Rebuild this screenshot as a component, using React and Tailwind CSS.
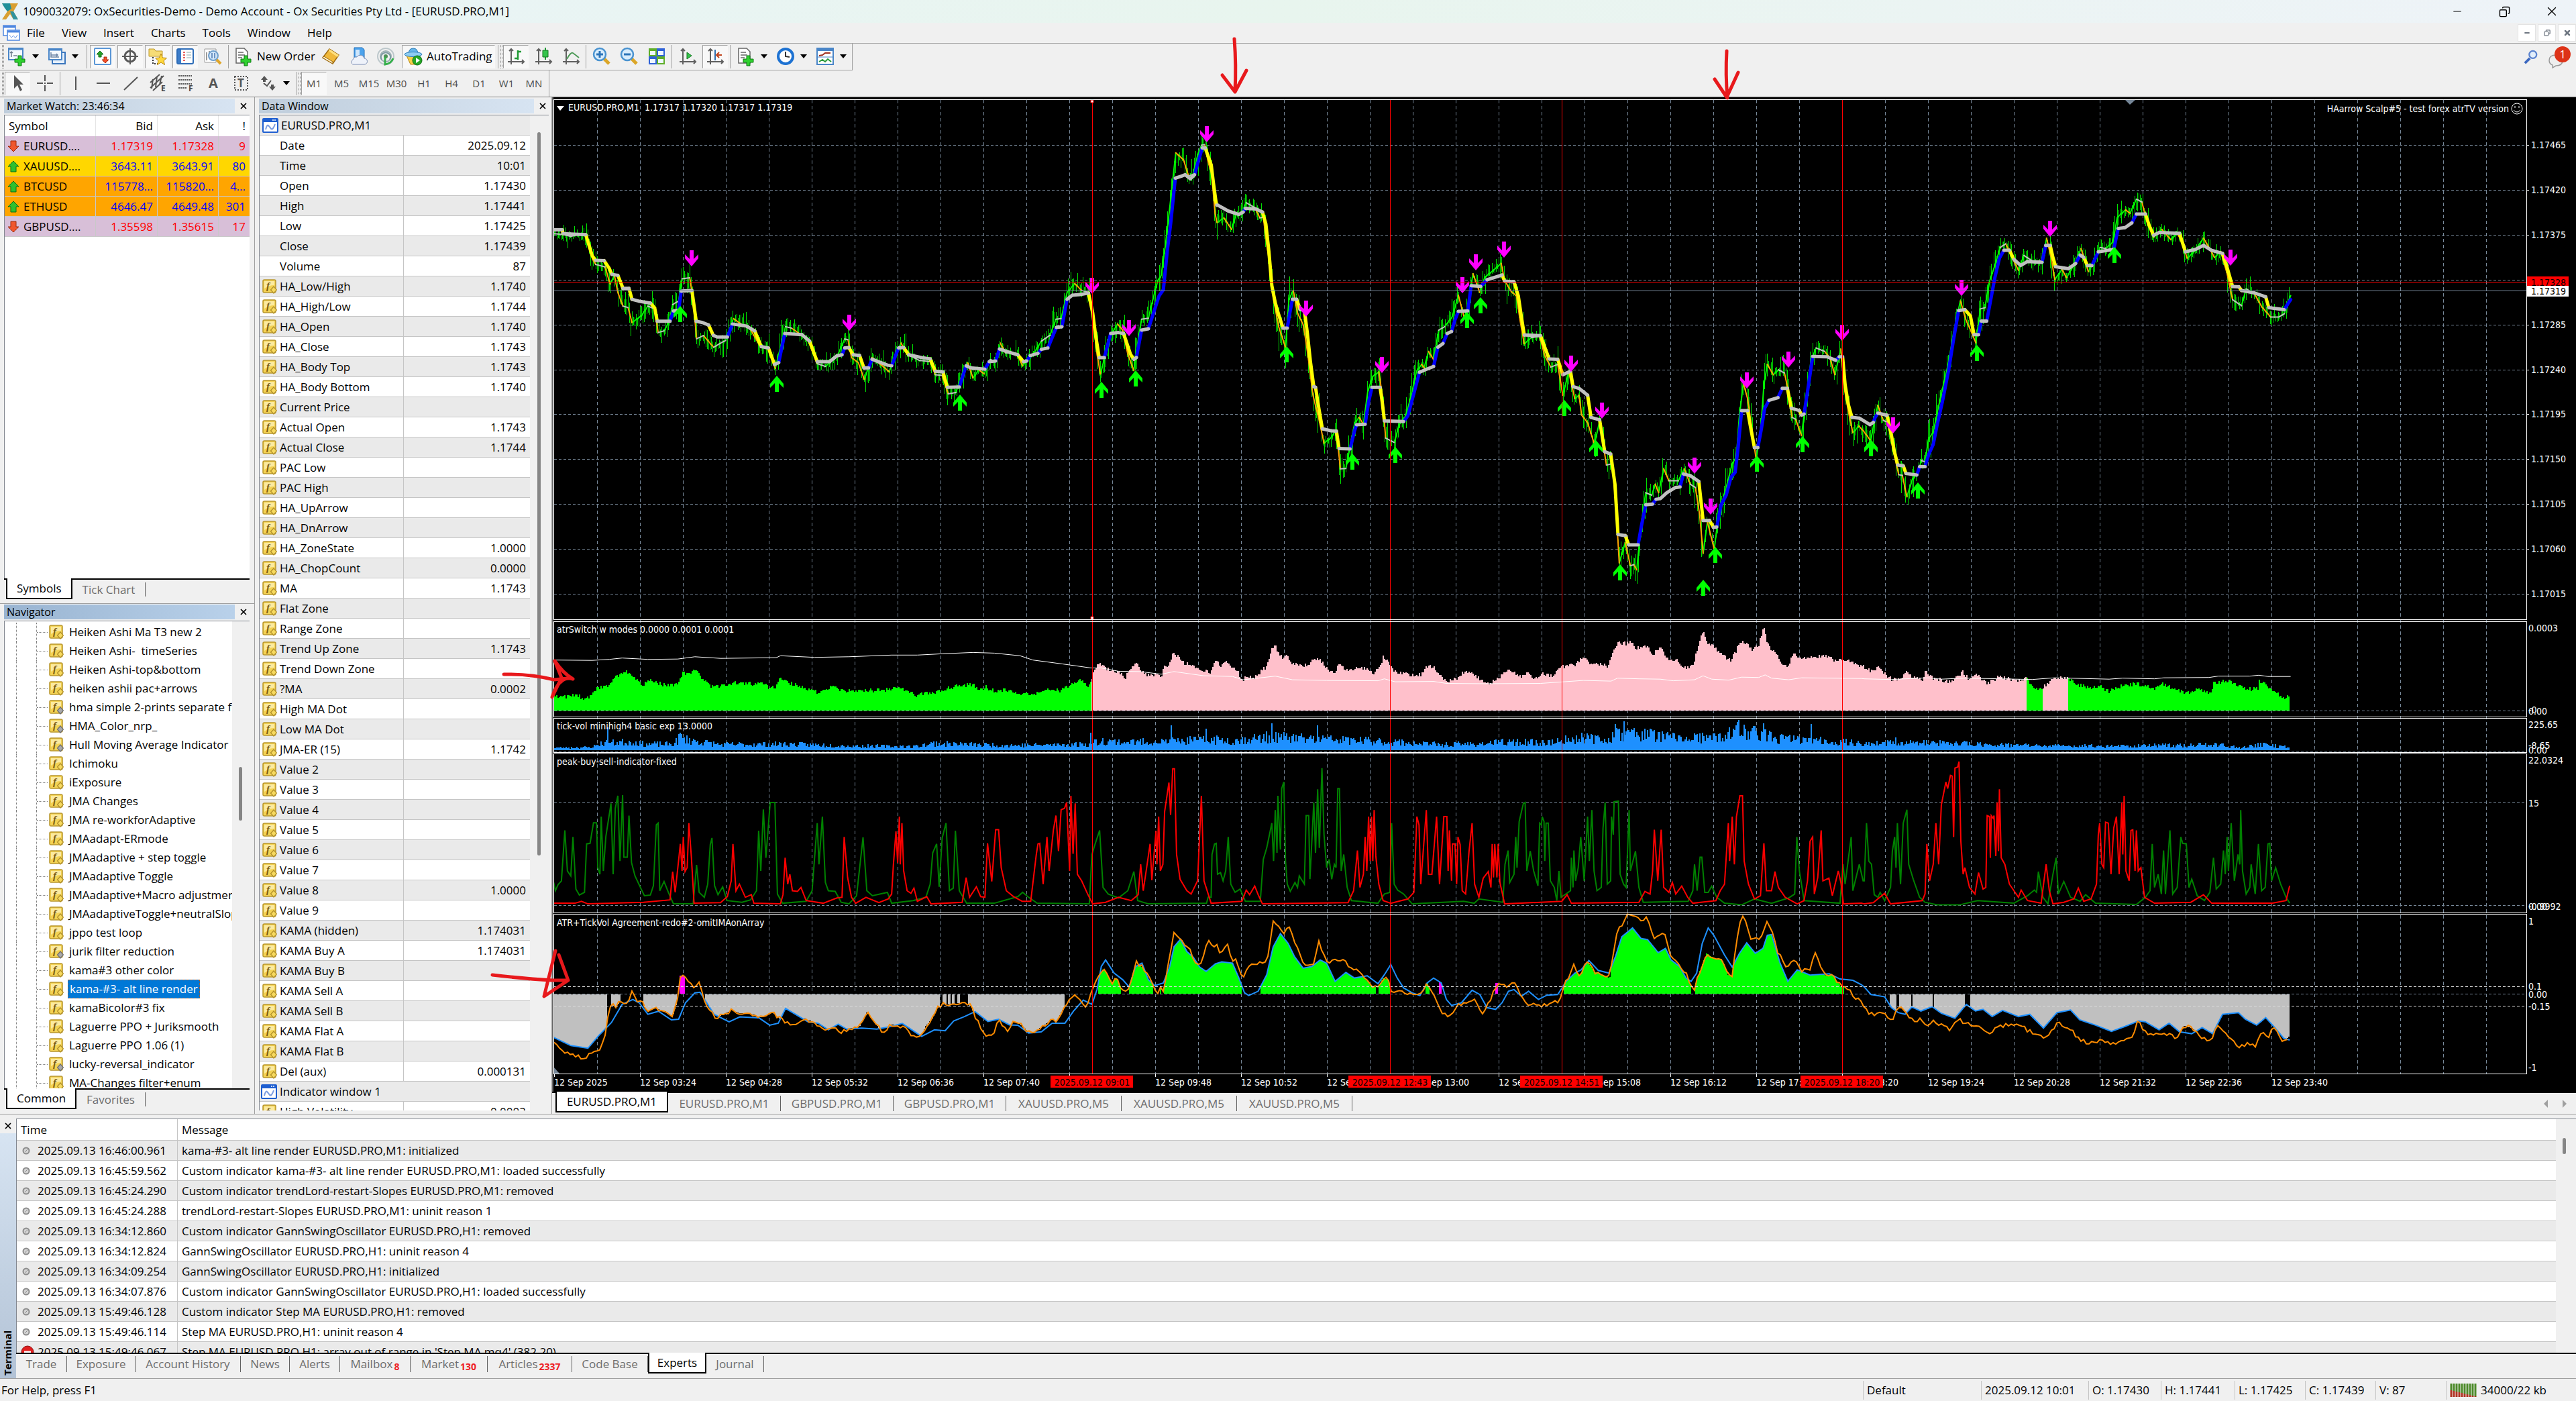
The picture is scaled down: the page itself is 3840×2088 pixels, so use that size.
import React from 'react';
import { Copy, Minus, X } from 'lucide-react';

/* ---------- static data ---------- */

const MENU = ['File', 'View', 'Insert', 'Charts', 'Tools', 'Window', 'Help'];
const TIMEFRAMES = ['M1', 'M5', 'M15', 'M30', 'H1', 'H4', 'D1', 'W1', 'MN'];

const QUOTES = [
  { symbol: 'EURUSD....', bid: '1.17319', ask: '1.17328', spread: '9', up: false, row: 'bg-[#d8bfd8] text-[#ff0000]' },
  { symbol: 'XAUUSD....', bid: '3643.11', ask: '3643.91', spread: '80', up: true, row: 'bg-[#ffd700] text-[#0000ff]' },
  { symbol: 'BTCUSD', bid: '115778...', ask: '115820...', spread: '4...', up: true, row: 'bg-[#ffa500] text-[#0000ff]' },
  { symbol: 'ETHUSD', bid: '4646.47', ask: '4649.48', spread: '301', up: true, row: 'bg-[#ffa500] text-[#0000ff]' },
  { symbol: 'GBPUSD....', bid: '1.35598', ask: '1.35615', spread: '17', up: false, row: 'bg-[#d8bfd8] text-[#ff0000]' },
];

// second field: true when the indicator has a grey (uncompiled) badge
const INDICATORS = [
  ['Heiken Ashi Ma T3 new 2'], ['Heiken Ashi-  timeSeries'], ['Heiken Ashi-top&bottom'], ['heiken ashii pac+arrows'],
  ['hma simple 2-prints separate full', true], ['HMA_Color_nrp_', true], ['Hull Moving Average Indicator', true], ['Ichimoku'],
  ['iExposure'], ['JMA Changes'], ['JMA re-workforAdaptive'], ['JMAadapt-ERmode'], ['JMAadaptive + step toggle'],
  ['JMAadaptive Toggle'], ['JMAadaptive+Macro adjustment'], ['JMAadaptiveToggle+neutralSlope'], ['jppo test loop'],
  ['jurik filter reduction', true], ['kama#3 other color'], ['kama-#3- alt line render'], ['kamaBicolor#3 fix'],
  ['Laguerre PPO + Juriksmooth'], ['Laguerre PPO 1.06 (1)'], ['lucky-reversal_indicator', true], ['MA-Changes filter+enum'],
];
const SELECTED = 'kama-#3- alt line render';

const BAR_VALUES = [
  ['Date', '2025.09.12'], ['Time', '10:01'], ['Open', '1.17430'], ['High', '1.17441'],
  ['Low', '1.17425'], ['Close', '1.17439'], ['Volume', '87'],
];
const BUFFERS = [
  ['HA_Low/High', '1.1740'], ['HA_High/Low', '1.1744'], ['HA_Open', '1.1740'], ['HA_Close', '1.1743'],
  ['HA_Body Top', '1.1743'], ['HA_Body Bottom', '1.1740'], ['Current Price', ''], ['Actual Open', '1.1743'],
  ['Actual Close', '1.1744'], ['PAC Low', ''], ['PAC High', ''], ['HA_UpArrow', ''], ['HA_DnArrow', ''],
  ['HA_ZoneState', '1.0000'], ['HA_ChopCount', '0.0000'], ['MA', '1.1743'], ['Flat Zone', ''], ['Range Zone', ''],
  ['Trend Up Zone', '1.1743'], ['Trend Down Zone', ''], ['?MA', '0.0002'], ['High MA Dot', ''], ['Low MA Dot', ''],
  ['JMA-ER (15)', '1.1742'], ['Value 2', ''], ['Value 3', ''], ['Value 4', ''], ['Value 5', ''], ['Value 6', ''],
  ['Value 7', ''], ['Value 8', '1.0000'], ['Value 9', ''], ['KAMA (hidden)', '1.174031'], ['KAMA Buy A', '1.174031'],
  ['KAMA Buy B', ''], ['KAMA Sell A', ''], ['KAMA Sell B', ''], ['KAMA Flat A', ''], ['KAMA Flat B', ''],
  ['Del (aux)', '0.000131'],
];

const LOG = [
  ['2025.09.13 16:46:00.961', 'kama-#3- alt line render EURUSD.PRO,M1: initialized'],
  ['2025.09.13 16:45:59.562', 'Custom indicator kama-#3- alt line render EURUSD.PRO,M1: loaded successfully'],
  ['2025.09.13 16:45:24.290', 'Custom indicator trendLord-restart-Slopes EURUSD.PRO,M1: removed'],
  ['2025.09.13 16:45:24.288', 'trendLord-restart-Slopes EURUSD.PRO,M1: uninit reason 1'],
  ['2025.09.13 16:34:12.860', 'Custom indicator GannSwingOscillator EURUSD.PRO,H1: removed'],
  ['2025.09.13 16:34:12.824', 'GannSwingOscillator EURUSD.PRO,H1: uninit reason 4'],
  ['2025.09.13 16:34:09.254', 'GannSwingOscillator EURUSD.PRO,H1: initialized'],
  ['2025.09.13 16:34:07.876', 'Custom indicator GannSwingOscillator EURUSD.PRO,H1: loaded successfully'],
  ['2025.09.13 15:49:46.128', 'Custom indicator Step MA EURUSD.PRO,H1: removed'],
  ['2025.09.13 15:49:46.114', 'Step MA EURUSD.PRO,H1: uninit reason 4'],
  ['2025.09.13 15:49:46.067', "Step MA EURUSD.PRO,H1: array out of range in 'Step MA.mq4' (382,20)", true],
];

const TERMINAL_TABS = [
  ['Trade', 'w-[76px]'], ['Exposure', 'w-[102px]'], ['Account History', 'w-[157px]'], ['News', 'w-[73px]'], ['Alerts', 'w-[75px]'],
  ['Mailbox', 'w-[105px]', '8'], ['Market', 'w-[115px]', '130'], ['Articles', 'w-[126px]', '2337'],
  ['Code Base', 'w-[113px]'], ['Experts', 'w-[87px]'], ['Journal', 'w-[86px]'],
];
const CHART_TABS = ['EURUSD.PRO,M1', 'EURUSD.PRO,M1', 'GBPUSD.PRO,M1', 'GBPUSD.PRO,M1', 'XAUUSD.PRO,M5', 'XAUUSD.PRO,M5', 'XAUUSD.PRO,M5'];

/* ---------- chart series ---------- */

// every series was sampled in three pieces, each with its own origin and scale
const PRICE = [[-4, -5, 1.568, 1.96], [976, -5, 1.568, 1.96], [1956, -145, 1.479, 1.668]];
const LOWER = [[-4, 765, 1.568, 2.036], [976, 765, 1.568, 2.036], [1956, 765, 1.479, 2.036]];

const pairs = (s) => s.trim().split(/\s+/).map((p) => p.split(',').map(Number));
const series = (frames, parts) => parts.flatMap((part, i) => {
  const [ox, oy, sx, sy] = frames[i];
  return pairs(part).map(([x, y]) => [ox + x / sx, oy + y / sy]);
}).sort((a, b) => a[0] - b[0]);

const slow = series(PRICE, [
  '10,397 30,397 32,408 85,411 100,473 108,486 128,487 140,510 146,527 160,530 168,555 172,568 186,568 193,600 208,605 236,611 246,625 252,664 282,664 290,634 302,632 308,576 333,574 343,664 358,668 372,675 383,705 392,710 416,710 428,672 460,678 480,692 495,738 512,742 526,790 536,785 550,700 590,703 608,722 626,782 655,782 672,765 684,762 690,742 700,741 710,762 725,764 735,800 746,800 754,775 790,792 800,794 816,742 828,741 840,762 870,770 890,774 902,810 920,812 930,857 958,856 974,794 985,800 1018,804 1028,782 1043,780 1052,745 1068,752 1095,762 1108,782 1116,780 1124,764 1142,758 1150,746 1165,742 1185,682 1198,680 1210,600 1222,588 1240,586 1260,582 1270,640 1276,700 1285,770 1297,770 1312,700 1330,697 1342,700 1350,730 1358,760 1366,775 1372,770 1384,690 1400,686 1412,640 1425,590 1435,572 1444,460 1452,380 1463,246 1478,240 1486,236 1498,248 1508,236 1516,200 1526,158 1533,158 1547,208 1552,260 1558,315 1560,325',
  '26,325 50,342 75,352 85,345 90,334 115,336 130,345 138,380 145,460 152,560 160,610 166,637 178,684 188,684 194,640 200,600 210,600 218,630 228,632 235,700 242,780 250,855 254,857 262,920 270,978 290,984 303,985 309,1036 335,1037 345,985 350,966 370,965 378,900 386,857 405,857 410,900 415,955 460,957 470,940 485,870 497,813 512,805 530,796 540,740 552,729 562,700 572,694 580,660 588,635 610,634 618,560 640,562 655,543 690,529 696,547 718,549 728,590 735,650 742,704 780,706 790,740 800,774 820,775 832,820 850,810 856,855 870,860 890,880 898,945 918,952 930,1045 944,1052 954,1140 961,1287 978,1290 986,1317 1008,1317 1016,1260 1026,1200 1042,1198 1050,1184 1060,1182 1075,1165 1095,1150 1106,1148 1114,1110 1130,1115 1150,1132 1156,1200 1160,1246 1175,1246 1184,1266 1192,1265 1202,1200 1214,1172 1225,1120 1235,1105 1242,1030 1250,925 1264,925 1272,980 1280,1033 1288,1033 1296,980 1304,918 1314,895 1335,887 1345,860 1357,860 1366,918 1385,925 1390,938 1396,935 1404,870 1416,767 1450,768 1470,778 1478,768 1486,768 1492,850 1500,910 1508,945 1525,947 1545,962 1550,966',
  '20,1050 24,1038 30,1027 50,1032 58,1070 66,1120 74,1156 86,1158 92,1177 116,1181 122,1160 134,1160 142,1130 152,1105 160,1060 172,1000 186,920 196,850 208,772 222,770 234,785 242,832 252,832 258,798 270,798 278,750 288,690 298,642 308,622 320,622 330,645 345,660 360,650 392,652 400,610 410,610 416,640 422,663 450,668 466,655 476,634 484,640 492,660 502,660 516,626 550,620 560,568 575,566 590,554 600,532 620,532 628,560 638,585 650,578 695,580 708,626 730,620 748,610 765,622 790,630 800,665 812,712 826,713 832,722 860,728 885,738 892,765 926,770 934,755 940,745',
]);

const fast = series(PRICE, [
  '10,408 30,410 50,416 70,410 88,415 100,480 108,498 130,505 142,555 152,530 160,580 172,620 184,624 193,668 215,648 230,620 246,628 254,697 268,692 280,665 288,615 302,605 310,540 328,537 336,600 344,715 360,706 384,740 400,728 412,720 430,656 448,672 470,688 492,736 512,745 528,802 540,740 552,680 566,684 590,705 606,724 626,788 645,796 672,768 690,716 698,718 706,770 722,785 736,834 754,770 778,794 794,812 808,765 822,728 836,760 864,778 890,782 902,820 918,822 932,876 950,872 970,800 978,786 990,830 1004,806 1016,818 1030,776 1044,782 1054,728 1066,756 1092,758 1106,794 1130,762 1150,722 1170,705 1184,658 1196,656 1210,580 1228,554 1244,574 1262,580 1270,650 1280,760 1288,818 1300,760 1312,705 1328,672 1340,690 1352,760 1366,808 1376,720 1384,658 1400,655 1410,604 1422,545 1430,530 1440,440 1452,310 1464,172 1482,192 1494,240 1504,235 1514,185 1524,150 1532,148 1540,200 1548,232 1556,350',
  '24,376 40,362 58,396 68,352 80,350 92,318 112,332 124,362 132,360 140,440 150,520 156,600 168,680 184,740 192,600 202,574 212,640 226,676 236,760 248,880 262,950 274,1020 290,1005 300,985 306,1020 312,1095 325,1094 336,1020 346,960 356,945 366,965 376,870 388,825 402,812 410,880 418,1005 438,1018 450,965 465,940 478,880 490,810 502,790 508,800 518,752 530,776 542,690 556,680 574,650 588,588 602,655 612,610 622,525 638,580 650,535 670,515 688,495 696,545 712,578 724,590 732,660 742,730 758,712 778,708 790,765 804,798 820,790 832,880 846,812 860,890 870,880 876,938 890,960 906,1024 918,956 934,1084 948,1080 956,1200 964,1370 978,1310 990,1378 998,1375 1005,1390 1015,1260 1026,1165 1040,1172 1048,1140 1056,1165 1068,1095 1080,1130 1102,1130 1116,1095 1130,1140 1142,1150 1152,1230 1160,1342 1170,1250 1186,1330 1196,1230 1214,1150 1228,1080 1238,1060 1244,950 1254,845 1264,890 1272,960 1284,1068 1296,960 1302,850 1310,790 1324,820 1336,806 1350,815 1358,860 1368,945 1376,950 1390,998 1400,900 1412,780 1424,742 1444,752 1456,770 1468,820 1482,745 1490,860 1500,930 1510,990 1524,970 1535,985',
  '14,1095 30,1008 42,1045 52,1050 64,1120 76,1180 84,1182 94,1235 106,1192 118,1175 126,1145 134,1148 142,1090 152,1075 162,1020 174,960 186,900 198,820 212,748 224,795 236,825 246,852 256,768 266,765 276,700 288,660 300,615 312,606 326,640 340,672 352,635 372,650 392,648 402,592 412,640 420,695 436,670 446,690 464,655 478,618 494,675 504,655 520,615 532,618 548,602 558,540 576,522 586,530 600,495 612,502 622,545 638,590 656,570 676,596 690,580 700,600 712,642 728,625 748,592 760,615 772,640 786,625 800,680 812,745 832,760 842,718 860,730 876,762 896,788 914,788 926,780 934,752 940,735',
]);

const sellMarks = series(PRICE, [
  '332,480 701,668 1269,560 1354,685 1536,118',
  '232,627 410,792 598,558 629,491 695,454 851,787 924,925 1140,1085 1178,1206 1263,836 1360,776 1485,698',
  '64,1057 214,715 410,568 807,640',
]);
const buyMarks = series(PRICE, [
  '305,643 531,846 960,901 1290,864 1371,832',
  '186,760 340,1075 440,1054 609,661 640,618 835,917 910,1035 966,1397 1161,1443 1189,1346 1286,1080 1393,1023 1553,1034',
  '15,1113 119,1219 249,877 551,634',
]);

const atr = series(LOWER, [
  '10,258 40,263 62,254 80,268 100,255 112,235 140,226 155,203 180,187 195,198 215,225 240,212 265,225 298,225 312,190 328,192 342,178 356,205 378,230 410,228 440,218 460,222 485,224 500,220 510,232 528,235 540,200 555,218 575,225 598,236 625,246 645,243 662,228 680,242 720,242 750,242 790,240 820,236 840,245 855,258 880,250 910,246 930,236 960,228 990,224 1005,238 1020,232 1040,242 1080,242 1100,252 1130,256 1150,245 1170,238 1195,244 1215,228 1240,210 1255,228 1264,228 1268,205 1270,192 1282,158 1295,165 1310,183 1330,185 1345,205 1358,180 1372,158 1385,185 1400,198 1420,192 1430,200 1438,170 1450,165 1458,122 1470,140 1485,158 1510,170 1530,182',
  '8,185 20,152 32,168 46,155 58,170 70,178 82,212 95,200 110,205 130,180 140,170 150,125 158,103 166,122 178,142 188,130 196,160 215,168 235,165 250,150 265,150 285,185 295,190 310,165 330,180 355,175 375,175 390,188 405,175 413,138 428,165 440,185 470,192 488,200 505,190 512,170 532,172 545,198 562,216 585,205 600,188 622,192 640,210 660,222 680,208 698,182 720,190 730,202 748,190 765,205 785,192 810,198 825,175 845,165 862,165 876,142 895,158 920,162 940,170 948,125 960,100 985,100 990,88 1000,115 1025,105 1045,132 1060,110 1078,145 1098,148 1115,175 1138,165 1146,120 1160,58 1170,98 1185,105 1200,128 1225,152 1238,120 1248,92 1262,98 1275,118 1290,105 1302,50 1312,105 1330,130 1345,160 1358,172 1370,132 1390,142 1420,145 1446,135 1465,150 1490,150 1520,160',
  '0,172 15,185 32,170 45,190 60,208 80,212 94,182 110,205 130,208 136,182 150,205 180,212 195,215 218,185 230,208 250,195 272,222 298,200 320,208 345,215 358,205 370,228 380,236 395,232 410,212 430,202 450,205 470,225 500,232 522,232 540,245 555,232 575,228 600,222 618,228 640,240 658,220 680,235 700,245 720,248 738,232 750,246 765,250 770,222 790,215 808,210 820,228 845,238 868,238 870,215 885,225 900,240 925,265 936,255 940,255',
]);
const atrSignal = series(LOWER, [
  '10,150 100,151 140,148 170,144 230,148 300,147 340,140 400,145 530,143 540,137 620,142 700,140 800,135 860,135 920,131 990,127 1040,129 1100,137 1130,150 1200,162 1266,174 1290,174 1330,184 1380,185 1430,193 1460,185 1530,198',
  '0,198 60,200 85,210 160,199 200,210 280,212 400,213 415,207 440,216 530,215 560,221 650,222 780,221 880,212 945,214 960,205 1010,207 1060,208 1090,213 1140,210 1160,198 1180,208 1220,211 1250,202 1290,203 1305,195 1320,205 1360,210 1390,204 1530,206',
  '0,207 60,209 140,204 170,208 220,205 300,207 370,209 420,204 540,208 570,205 640,207 660,204 760,203 780,199 850,199 870,196 890,200 940,200',
]);
const volume = series(LOWER, [
  '10,416 100,414 120,402 190,396 220,404 290,404 305,384 345,396 400,406 560,404 700,410 850,412 900,402 1000,406 1100,408 1200,406 1260,404 1290,394 1340,398 1450,396 1530,392',
  '0,388 60,394 150,382 300,390 440,398 550,406 620,404 700,398 800,400 880,382 930,394 950,374 1010,369 1100,386 1200,384 1245,359 1300,374 1330,386 1530,402',
  '0,404 70,400 200,402 400,410 600,410 780,406 830,416 870,406 940,414',
]);
const volumeSpikes = series(LOWER, ['137,354 305,370 1266,370 1453,348 1535,358', '152,342 258,348 955,345 976,336 1243,332 1302,342 1412,345', '70,384 137,392']);

const peakBuy = series(LOWER, [
  '10,825 14,850 20,832 28,820 36,667 42,790 50,805 55,687 62,845 70,863 82,855 87,708 95,706 103,644 110,644 113,780 118,800 121,625 126,790 132,685 144,585 149,800 154,600 160,562 165,760 171,560 174,748 182,748 186,622 192,765 200,805 212,838 222,865 236,863 243,835 250,650 254,645 258,850 268,822 278,855 290,890 336,890 344,772 350,855 362,870 370,830 376,710 380,690 386,835 394,862 405,838 415,880 450,885 470,878 484,850 489,668 494,790 500,603 506,750 516,582 527,582 533,860 545,888 600,882 614,850 626,645 630,770 638,625 645,825 652,850 668,852 682,885 700,890 718,865 733,688 742,850 755,865 790,855 800,888 850,880 880,870 890,830 896,735 905,708 911,838 918,690 927,645 935,850 944,842 949,668 958,850 975,888 1040,888 1095,868 1106,855 1118,868 1140,888 1262,890 1268,740 1276,706 1286,667 1294,840 1306,860 1330,872 1352,850 1366,792 1375,880 1400,890 1536,888',
  '3,870 10,870 12,740 18,708 22,706 25,800 32,795 38,820 44,790 50,687 56,830 66,855 78,845 90,882 125,882 132,755 140,720 152,645 156,760 160,605 164,735 166,562 172,725 175,540 180,520 184,760 188,830 195,852 206,825 212,840 216,805 228,830 232,622 238,622 241,815 250,582 254,735 259,542 263,720 269,478 274,680 280,780 286,755 292,815 298,770 302,780 306,540 310,540 314,790 320,740 328,840 338,880 400,888 415,860 428,855 432,645 438,830 446,848 460,860 480,890 600,882 625,888 636,875 692,885 697,770 704,728 708,825 718,800 722,687 725,780 730,640 740,585 744,582 748,790 756,730 764,790 774,835 778,645 782,650 784,625 788,640 790,760 793,645 798,645 803,820 812,840 818,880 823,790 828,870 850,850 852,750 856,840 858,728 862,820 868,780 874,687 882,820 890,625 894,760 900,605 905,790 912,850 922,840 926,660 931,582 936,830 944,820 946,625 950,680 952,580 962,578 966,800 974,830 980,840 987,605 990,790 1002,730 1010,840 1020,885 1125,882 1136,850 1140,770 1146,850 1153,748 1157,748 1164,855 1172,855 1180,836 1192,870 1210,888 1250,893 1280,875 1320,888 1360,872 1374,860 1379,687 1385,790 1396,880 1480,888 1487,770 1492,830 1506,687 1510,850 1525,770 1534,820',
  '0,820 5,645 10,760 16,770 22,862 30,870 35,855 45,880 58,840 62,730 67,687 70,780 73,645 80,830 86,645 94,604 98,770 108,815 122,870 134,885 160,893 210,893 250,880 330,888 360,865 375,848 380,855 384,792 394,870 405,890 416,800 423,750 428,860 440,822 455,870 476,882 488,862 510,888 600,892 620,870 630,850 635,708 640,840 648,800 655,860 660,728 664,860 674,667 680,860 690,840 698,687 702,706 710,708 716,840 722,815 734,865 750,880 762,855 770,750 776,845 786,830 792,728 796,800 800,687 803,790 809,645 816,820 824,740 828,770 830,605 834,790 842,860 850,840 853,770 862,860 869,708 876,850 884,840 890,708 894,706 898,820 907,780 918,830 930,870 938,888',
]);
const peakSell = series(LOWER, [
  '10,888 60,888 75,882 90,890 220,885 282,878 288,792 294,855 306,708 310,790 313,687 317,792 322,780 326,645 332,750 338,888 400,886 416,868 425,820 429,708 436,850 444,830 458,870 472,862 478,888 540,890 546,862 551,750 557,830 562,800 568,850 580,852 588,840 600,880 640,888 672,872 684,870 689,687 697,810 706,870 716,888 740,870 770,886 792,875 800,860 804,770 810,670 814,765 818,625 820,770 824,645 828,790 836,850 845,858 852,842 860,882 882,868 892,890 965,885 974,810 982,870 998,838 1008,868 1018,870 1024,706 1034,822 1043,665 1050,665 1056,780 1068,850 1085,868 1105,882 1125,882 1138,740 1142,708 1146,706 1154,830 1163,687 1168,790 1178,665 1184,622 1190,730 1196,604 1204,600 1209,582 1216,790 1219,562 1224,738 1229,585 1234,800 1244,820 1258,860 1270,890 1300,885 1330,870 1360,880 1376,862 1382,770 1388,850 1396,780 1404,708 1408,818 1418,668 1420,770 1424,625 1428,790 1434,770 1438,610 1448,522 1452,620 1457,480 1461,480 1466,740 1474,815 1490,850 1500,860 1515,820 1524,562 1530,820',
  '10,888 82,882 92,848 100,862 112,836 120,862 130,890 330,886 343,850 352,728 358,840 366,800 370,687 374,790 378,625 382,760 385,625 388,760 391,605 395,745 402,830 412,880 430,888 470,875 484,855 491,625 496,650 500,830 513,605 518,800 526,800 537,625 544,830 554,625 561,625 564,790 567,667 572,820 574,708 580,708 584,830 587,687 592,710 597,850 605,860 613,730 620,645 626,830 636,870 646,812 658,792 664,840 667,708 670,810 673,708 678,810 681,708 685,825 696,890 830,882 842,862 852,888 1010,885 1024,852 1036,860 1042,790 1046,665 1054,820 1062,665 1068,840 1080,855 1088,825 1096,860 1110,836 1124,870 1136,888 1190,880 1200,850 1210,830 1219,645 1222,760 1228,625 1233,770 1238,625 1246,562 1252,562 1256,760 1266,830 1280,875 1294,865 1302,706 1308,850 1320,850 1328,792 1336,840 1352,870 1380,890 1396,880 1404,820 1410,700 1416,687 1420,860 1428,810 1436,667 1440,820 1454,812 1462,865 1476,790 1482,825 1488,890 1530,888',
  '0,890 20,886 45,858 58,890 128,880 134,860 138,708 144,820 152,770 158,645 164,770 170,590 180,520 184,540 190,500 194,502 197,687 200,478 206,475 209,458 213,700 218,800 222,780 232,840 244,860 252,795 262,845 268,840 271,622 276,625 278,750 280,622 284,630 286,622 290,745 293,582 296,730 298,542 302,750 310,770 320,830 340,870 346,848 360,880 390,888 401,770 408,850 416,890 440,885 462,875 472,842 484,882 500,875 512,830 516,680 519,645 524,770 528,780 532,642 538,645 544,800 550,660 556,625 562,800 568,582 570,740 573,562 577,790 584,820 588,667 592,665 597,790 600,667 604,790 610,780 618,870 640,888 720,885 748,862 766,888 900,888 930,880 938,835',
]);

const tickVol = series(LOWER, [
  '10,1295 50,1320 90,1328 115,1290 145,1250 170,1195 195,1180 210,1190 230,1225 255,1216 285,1242 302,1240 318,1190 340,1160 352,1158 370,1195 385,1225 420,1248 445,1233 490,1236 515,1258 535,1252 552,1207 575,1225 605,1248 628,1252 652,1272 675,1255 695,1270 730,1267 765,1270 795,1263 825,1253 850,1275 870,1292 900,1272 925,1275 945,1245 970,1232 995,1217 1025,1247 1050,1240 1075,1257 1095,1258 1120,1282 1150,1278 1175,1252 1205,1252 1225,1215 1248,1182 1268,1195 1280,1150 1290,1080 1300,1060 1320,1100 1340,1120 1355,1142 1370,1080 1385,1070 1400,1120 1415,1138 1435,1130 1450,1080 1460,1020 1475,997 1490,1035 1505,1052 1520,1082 1535,1095',
  '8,1085 20,1072 35,1066 60,1070 75,1115 88,1160 98,1168 120,1155 140,1105 155,1020 172,980 190,1010 205,1050 225,1085 245,1080 265,1060 280,1070 300,1125 325,1098 345,1115 375,1108 400,1132 415,1105 430,1074 445,1115 460,1145 480,1160 498,1168 515,1130 530,1115 548,1130 560,1180 572,1198 595,1190 620,1152 638,1165 655,1205 675,1210 690,1190 705,1155 718,1150 735,1170 752,1155 775,1180 795,1167 820,1165 840,1125 860,1100 875,1090 893,1062 915,1092 940,1100 955,1050 970,990 995,963 1015,995 1030,998 1055,1038 1072,1025 1085,1060 1105,1080 1120,1115 1132,1125 1145,1100 1158,1010 1172,963 1185,985 1210,1045 1228,1082 1245,1040 1262,1008 1282,1040 1300,1025 1310,985 1320,983 1340,1070 1358,1125 1380,1090 1410,1106 1455,1102 1480,1118 1510,1122 1530,1135',
  '0,1142 15,1165 45,1172 60,1205 75,1220 90,1225 105,1203 125,1215 150,1202 170,1222 200,1237 225,1195 245,1215 262,1210 282,1232 305,1213 340,1232 365,1225 395,1267 425,1220 455,1212 475,1242 510,1258 545,1277 575,1262 605,1245 620,1248 650,1272 672,1252 695,1278 722,1284 745,1265 768,1284 790,1225 825,1220 840,1240 865,1258 885,1235 905,1265 925,1298 938,1303',
]);
const atrLine = series(LOWER, [
  '10,1312 35,1340 60,1352 80,1360 98,1342 120,1332 132,1275 140,1195 155,1202 165,1187 175,1198 185,1182 194,1148 202,1180 215,1185 228,1215 245,1207 262,1212 275,1218 288,1232 298,1190 306,1110 320,1110 335,1142 350,1132 362,1180 376,1215 390,1235 410,1225 425,1212 445,1222 470,1222 495,1235 520,1218 535,1235 550,1248 580,1258 590,1235 610,1245 628,1258 640,1270 655,1275 668,1260 680,1280 700,1268 725,1262 742,1218 760,1248 778,1280 800,1255 820,1262 835,1272 850,1292 866,1298 880,1260 895,1238 910,1200 925,1192 940,1196 968,1187 985,1200 1000,1245 1022,1295 1040,1280 1050,1242 1070,1278 1085,1245 1100,1255 1125,1285 1145,1268 1165,1250 1175,1240 1185,1250 1200,1210 1215,1182 1232,1168 1245,1195 1256,1212 1268,1145 1285,1110 1295,1085 1315,1128 1325,1115 1335,1140 1350,1155 1362,1110 1372,1065 1388,1085 1400,1110 1412,1140 1420,1165 1428,1140 1434,1155 1442,1110 1450,1040 1460,980 1475,1000 1492,1018 1505,1055 1520,1080 1530,1040',
  '2,1000 12,1018 22,1012 32,1045 48,1012 58,1065 70,1060 82,1118 100,1075 118,1070 135,1068 145,1040 155,940 170,960 180,975 190,950 205,1010 218,1045 230,1075 250,1070 262,1005 275,1050 288,1075 295,1055 320,1065 332,1078 350,1090 365,1110 382,1135 400,1145 412,1115 425,1120 432,1155 455,1150 470,1165 490,1168 508,1150 515,1125 522,1150 540,1190 552,1222 566,1235 580,1205 600,1190 625,1182 645,1222 660,1190 672,1150 682,1130 700,1140 718,1132 735,1165 750,1192 775,1200 800,1195 822,1185 838,1130 858,1078 872,1110 888,1060 905,1095 925,1105 942,1115 950,1040 962,955 974,955 978,923 1005,923 1010,935 1028,935 1045,992 1058,985 1070,985 1085,1055 1105,1075 1120,1100 1130,1130 1137,1162 1145,1120 1155,1085 1168,1040 1185,1055 1205,1060 1218,1105 1228,1110 1235,1040 1245,950 1254,923 1272,998 1285,992 1295,995 1308,938 1320,965 1335,1040 1355,1078 1378,1060 1390,1090 1408,1095 1420,1033 1430,1060 1445,1108 1462,1105 1482,1140 1498,1145 1510,1170 1530,1185',
  '0,1200 12,1222 45,1225 62,1245 74,1200 90,1215 112,1252 120,1235 140,1258 152,1242 172,1262 190,1272 208,1238 225,1255 255,1255 272,1285 295,1262 320,1255 350,1265 375,1285 398,1298 428,1250 450,1265 475,1300 495,1312 525,1302 550,1318 575,1298 592,1292 602,1245 628,1290 655,1280 672,1285 688,1302 706,1260 725,1268 745,1295 765,1308 780,1252 800,1290 830,1325 845,1310 862,1322 875,1280 890,1295 902,1265 925,1308 938,1290',
]);

const FIRST_BAR = 3;
const LAST_BAR = 2590;
const BAR = 2;

function valueAt(points, x) {
  let i = 1;
  while (i < points.length - 1 && points[i][0] < x) i += 1;
  const [x0, y0] = points[i - 1];
  const [x1, y1] = points[i];
  if (x1 === x0) return y1;
  const t = Math.min(1, Math.max(0, (x - x0) / (x1 - x0)));
  return y0 + (y1 - y0) * t;
}

// small seeded generator, so the bars are the same on every render
function noise(seed) {
  let s = seed;
  return () => {
    s = (s * 1664525 + 1013904223) % 4294967296;
    return s / 4294967296;
  };
}

const bars = [];
for (let x = FIRST_BAR; x <= LAST_BAR; x += BAR) bars.push(x);

const toPath = (points) => points.map(([x, y], i) => `${i ? 'L' : 'M'}${x.toFixed(1)} ${y.toFixed(1)}`).join('');

function wicks() {
  const rnd = noise(11);
  return bars.map((x) => {
    const y = valueAt(fast, x);
    const slope = Math.abs(valueAt(fast, x + 6) - valueAt(fast, x - 6));
    const reach = 9 + Math.min(20, slope * 0.4);
    const up = 1 + rnd() * reach + (rnd() > 0.9 ? 10 : 0);
    const down = 1 + rnd() * reach + (rnd() > 0.9 ? 10 : 0);
    return `M${x} ${(y - up).toFixed(1)}V${(y + down).toFixed(1)}`;
  }).join('');
}

// splits a line into rising, falling and flat runs
function runs(points, limit) {
  const out = { up: '', down: '', flat: '' };
  for (let i = 1; i < points.length; i += 1) {
    const [x0, y0] = points[i - 1];
    const [x1, y1] = points[i];
    const slope = (y1 - y0) / Math.max(1, x1 - x0);
    let key = 'flat';
    if (slope > limit) key = 'down';
    if (slope < -limit) key = 'up';
    out[key] += `M${x0.toFixed(1)} ${y0.toFixed(1)}L${x1.toFixed(1)} ${y1.toFixed(1)}`;
  }
  return out;
}

const ATR_BASE = 914;
const isCalm = (x) => x < 805 || (x > 2198 && x < 2223) || x > 2260;

function atrBars(calm) {
  const rnd = noise(5);
  return bars.map((x) => {
    const jitter = rnd() * 6 - 3;
    if (isCalm(x) !== calm) return '';
    return `M${x} ${ATR_BASE}V${(valueAt(atr, x) + jitter).toFixed(0)}`;
  }).join('');
}

const VOL_BASE = 973;

function volumeBars() {
  const rnd = noise(23);
  return bars.map((x) => {
    const h = (VOL_BASE - valueAt(volume, x)) * (0.5 + rnd() * 0.9);
    return `M${x} ${VOL_BASE}V${(VOL_BASE - h).toFixed(0)}`;
  }).join('');
}

const ZERO = 1336;
const BUY_LEVEL = 1326;
const SELL_LEVEL = 1351;
const SELL_GAPS = [[82, 89], [102, 137], [578, 583], [587, 591], [594, 597], [599, 605], [608, 621], [764, 1995], [2004, 2008], [2025, 2028], [2057, 2060], [2106, 2114]];
const inGap = (x) => SELL_GAPS.some(([from, to]) => x > from && x < to);

// the histogram is drawn only where both lines are on the same side
function agreement(side) {
  return bars.map((x) => {
    const a = valueAt(tickVol, x);
    const b = valueAt(atrLine, x);
    if (side === 'buy' && a < BUY_LEVEL && b < BUY_LEVEL) return `M${x} ${ZERO}V${Math.max(a, b).toFixed(0)}`;
    if (side === 'sell' && a > SELL_LEVEL - 5 && b > SELL_LEVEL - 5 && !inGap(x)) return `M${x} ${ZERO + 1}V${Math.min(a, b).toFixed(0)}`;
    return '';
  }).join('');
}

function jagged(points) {
  const rnd = noise(77);
  const out = [];
  for (let x = FIRST_BAR; x <= LAST_BAR; x += 4) out.push([x, valueAt(points, x) + rnd() * 6 - 3]);
  return out;
}

/* ---------- chart ---------- */

const PRICE_LEVELS = ['1.17465', '1.17420', '1.17375', '', '1.17285', '1.17240', '1.17195', '1.17150', '1.17105', '1.17060', '1.17015'];
const TIMES = [
  '12 Sep 2025', '12 Sep 03:24', '12 Sep 04:28', '12 Sep 05:32', '12 Sep 06:36', '12 Sep 07:40', '', '12 Sep 09:48',
  '12 Sep 10:52', '12 Sep 11:56', '12 Sep 13:00', '12 Sep 14:04', '12 Sep 15:08', '12 Sep 16:12', '12 Sep 17:16', '12 Sep 18:20',
  '12 Sep 19:24', '12 Sep 20:28', '12 Sep 21:32', '12 Sep 22:36', '12 Sep 23:40',
];
const MARKERS = [[805, '2025.09.12 09:01'], [1249, '2025.09.12 12:43'], [1505, '2025.09.12 14:51'], [1923, '2025.09.12 18:20']];
const RIGHT = 2943;
// top and bottom of every chart window
const WINDOWS = [[3, 778], [781, 923], [925, 976], [978, 1215], [1217, 1455]];

function ScaleText({ y, x = 2950, children }) {
  return <text x={x} y={y + 5} fill="#fff">{children}</text>;
}

function TradeMark({ x, y, down }) {
  return (
    <path
      d="M0-12L10 0V6L3-1V12H-3V-1L-10 6V0Z"
      fill={down ? '#ff00ff' : '#00ff00'}
      transform={`translate(${x.toFixed(0)} ${y.toFixed(0)})${down ? ' rotate(180)' : ''}`}
    />
  );
}

function PriceChart() {
  const slowRuns = runs(slow, 1);
  const fastRuns = runs(fast, 0.7);
  const columns = Array.from({ length: 45 }, (_, i) => 67 + i * 64);
  return (
    <svg className="block min-h-0 w-full flex-1 bg-black font-['DejaVu_Sans_Condensed','Noto_Sans',sans-serif] text-[14px]" role="img" aria-label="EURUSD.PRO,M1 chart">
      <g stroke="#778899" shapeRendering="crispEdges" fill="none">
        {columns.map((x) => <path key={x} d={`M${x}.5 4V1455`} strokeDasharray="5 4" />)}
        {PRICE_LEVELS.map((_, i) => <path key={i} d={`M3 ${Math.round(71 + i * 66.9)}.5H${RIGHT}`} strokeDasharray="4 3" />)}
        <path d={`M3 914.5H${RIGHT}M3 974.5H${RIGHT}M3 1051.5H${RIGHT}M3 1204.5H${RIGHT}M3 1336.5H${RIGHT}`} strokeDasharray="4 3" />
      </g>

      {/* price window */}
      <path d={wicks()} stroke="#00e000" shapeRendering="crispEdges" />
      <g fill="none" strokeWidth="2" strokeLinecap="round">
        <path d={fastRuns.up} stroke="#00ff00" />
        <path d={fastRuns.down} stroke="#ffa500" />
        <path d={fastRuns.flat} stroke="#c0c0c0" />
      </g>
      <g fill="none" strokeWidth="5" strokeLinecap="round">
        <path d={slowRuns.up} stroke="#0000ff" />
        <path d={slowRuns.down} stroke="#ffff00" />
        <path d={slowRuns.flat} stroke="#c0c0c0" />
      </g>
      {sellMarks.map(([x, y]) => <TradeMark key={x} x={x} y={y} down />)}
      {buyMarks.map(([x, y]) => <TradeMark key={x} x={x} y={y} />)}

      {/* volatility window */}
      <path d={atrBars(true)} stroke="#00ff00" strokeWidth="2" shapeRendering="crispEdges" />
      <path d={atrBars(false)} stroke="#ffc0cb" strokeWidth="2" shapeRendering="crispEdges" />
      <path d={toPath(atrSignal)} stroke="#fff" fill="none" strokeWidth="1" />

      {/* tick volume window */}
      <path d={volumeBars()} stroke="#1e90ff" strokeWidth="2" shapeRendering="crispEdges" />
      <path d={volumeSpikes.map(([x, y]) => `M${x.toFixed(0)} ${VOL_BASE}V${y.toFixed(0)}`).join('')} stroke="#1e90ff" strokeWidth="2" shapeRendering="crispEdges" />

      {/* peak window */}
      <path d={toPath(peakBuy)} stroke="#008000" fill="none" strokeWidth="2" />
      <path d={toPath(peakSell)} stroke="#ff0000" fill="none" strokeWidth="2" />

      {/* agreement window */}
      <path d={agreement('sell')} stroke="#c0c0c0" strokeWidth="2" shapeRendering="crispEdges" />
      <path d={agreement('buy')} stroke="#00ff00" strokeWidth="2" shapeRendering="crispEdges" />
      <path d={`M190 1309H198V${ZERO}H190ZM1322 1319H1326V${ZERO}H1322ZM1406 1320H1410V${ZERO}H1406Z`} fill="#ff00ff" />
      <path d={toPath(tickVol)} stroke="#1e90ff" fill="none" strokeWidth="2" />
      <path d={toPath(jagged(atrLine))} stroke="#ff8c00" fill="none" strokeWidth="2" />
      <path d={`M3 1325.5H${RIGHT}M3 1354.5H${RIGHT}`} stroke="#dcdcdc" strokeDasharray="4 3" shapeRendering="crispEdges" />

      {/* price lines and vertical markers */}
      <path d={`M3 275.5H${RIGHT}`} stroke="#ff0000" shapeRendering="crispEdges" />
      <path d={`M3 288.5H${RIGHT}`} stroke="#778899" shapeRendering="crispEdges" />
      {MARKERS.map(([x]) => <path key={x} d={`M${x}.5 4V1455`} stroke="#ff0000" shapeRendering="crispEdges" />)}
      <path d="M803 4h4v4h-4zM803 774h4v4h-4z" fill="#fff" stroke="#ff0000" />

      {/* frames */}
      <g stroke="#fff" fill="none" shapeRendering="crispEdges">
        {WINDOWS.map(([top, bottom]) => <path key={top} d={`M2.5 ${top}.5H${RIGHT}.5V${bottom}.5H2.5Z`} />)}
        {PRICE_LEVELS.map((_, i) => <path key={i} d={`M${RIGHT} ${Math.round(71 + i * 66.9)}.5h4`} />)}
        {TIMES.map((_, i) => <path key={i} d={`M${3 + i * 128}.5 1455v5`} />)}
      </g>
      <path d="M2 0H0V1482H2Z" fill="#696969" />
      <path d="M3 1446L11 1455H3Z" fill="#778899" />
      <path d="M2345 4H2360L2352 11Z" fill="#778899" />
      <path d="M7 13H18L12 20Z" fill="#fff" />

      <g fill="#fff">
        <text x="24" y="20" xmlSpace="preserve">EURUSD.PRO,M1  1.17317 1.17320 1.17317 1.17319</text>
        <text x="2917" y="22" textAnchor="end">HAarrow Scalp#5 - test forex atrTV version</text>
        <text x="7" y="798">atrSwitch w modes 0.0000 0.0001 0.0001</text>
        <text x="7" y="942">tick-vol minihigh4 basic exp 13.0000</text>
        <text x="7" y="995">peak-buy-sell-indicator-fixed</text>
        <text x="7" y="1235">ATR+TickVol Agreement-redo#2-omitIMAonArray</text>
      </g>
      <g fill="none" stroke="#fff">
        <circle cx="2929" cy="17" r="8" />
        <path d="M2924 19q5 6 10 0M2926 13v3M2932 13v3" />
      </g>

      {PRICE_LEVELS.map((label, i) => (label ? <ScaleText key={label} y={71 + i * 66.9}>{label}</ScaleText> : null))}
      <rect x={RIGHT + 1} y="267" width="62" height="17" fill="#ff0000" />
      <ScaleText y={276}><tspan fill="#000">1.17328</tspan></ScaleText>
      <rect x={RIGHT + 1} y="281" width="62" height="16" fill="#fff" />
      <ScaleText y={289}><tspan fill="#000">1.17319</tspan></ScaleText>
      <ScaleText x={2946} y={791}>0.0003</ScaleText>
      <ScaleText x={2946} y={915}>0.00</ScaleText>
      <ScaleText x={2946} y={913}>-0</ScaleText>
      <ScaleText x={2946} y={935}>225.65</ScaleText>
      <ScaleText x={2946} y={966}>-8.65</ScaleText>
      <ScaleText x={2946} y={973}>0.00</ScaleText>
      <ScaleText x={2946} y={988}>22.0324</ScaleText>
      <ScaleText x={2946} y={1052}>15</ScaleText>
      <ScaleText x={2946} y={1206}>0.00</ScaleText>
      <ScaleText x={2946} y={1206}>-0.9992</ScaleText>
      <ScaleText x={2946} y={1228}>1</ScaleText>
      <ScaleText x={2946} y={1325}>0.1</ScaleText>
      <ScaleText x={2946} y={1337}>0.00</ScaleText>
      <ScaleText x={2946} y={1355}>-0.15</ScaleText>
      <ScaleText x={2946} y={1446}>-1</ScaleText>

      {TIMES.map((t, i) => (t ? <text key={t} x={3 + i * 128} y="1473" fill="#fff">{t}</text> : null))}
      {MARKERS.map(([x, label]) => (
        <g key={label}>
          <rect x={x - 62} y="1458" width="123" height="18" fill="#ff0000" />
          <text x={x} y="1473" textAnchor="middle" fill="#000">{label}</text>
        </g>
      ))}
    </svg>
  );
}

/* ---------- icons ---------- */

function Svg({ children, label }) {
  return <svg viewBox="0 0 28 28" className="size-7 shrink-0 overflow-visible" aria-label={label} aria-hidden={label ? undefined : true}>{children}</svg>;
}

function FunctionIcon({ grey }) {
  return (
    <svg viewBox="0 0 22 22" className="size-[22px] shrink-0" aria-hidden="true">
      <rect x="1" y="1" width="19" height="19" rx="2" fill="#f3d254" stroke="#b8962e" strokeWidth="1.5" />
      <path d="M3 3h15v6q-8 0-15 5z" fill="#fbeaa0" />
      <text x="6" y="15" fontSize="15" fontStyle="italic" fontWeight="bold" fontFamily="Liberation Serif, serif" fill="#7a5c12">f</text>
      <path d="M17 11l4.500 5-4.500 5-4.500-5z" fill={grey ? '#a9a9a9' : '#f6d95f'} stroke={grey ? '#6f6f6f' : '#b08f2a'} strokeWidth="1.200" />
    </svg>
  );
}

function WindowIcon() {
  return (
    <svg viewBox="0 0 24 22" className="h-[22px] w-6 shrink-0" aria-hidden="true">
      <rect x="1" y="1" width="22" height="20" rx="1" fill="#fff" stroke="#1f5fd0" strokeWidth="2" />
      <path d="M1 1h22v5H1z" fill="#1f5fd0" />
      <path d="M15 3h2M18 3h2" stroke="#fff" strokeWidth="1.500" />
      <path d="M5 17q2-8 4-6t4 5q3 2 6-7" fill="none" stroke="#7b9ce0" strokeWidth="2" />
    </svg>
  );
}

function PlusBadge() {
  return <path d="M15 13h5v5h5v5h-5v5h-5v-5h-5v-5h5z" fill="#2fd02f" stroke="#0c7a12" />;
}

function NewChartIcon() {
  return (
    <Svg>
      <rect x="1" y="2" width="21" height="17" fill="#f4f9ff" stroke="#4a86c8" strokeWidth="2" />
      <path d="M1 3h21" stroke="#4a86c8" strokeWidth="3" />
      <path d="M5 7v8M3 9l2-2 2 2M8 13h6" fill="none" stroke="#6f7f90" strokeWidth="1.500" />
      <PlusBadge />
    </Svg>
  );
}

function ProfilesIcon() {
  return (
    <Svg>
      <rect x="7" y="8" width="19" height="17" fill="#e6f0fb" stroke="#3a76bd" strokeWidth="2" />
      <rect x="2" y="3" width="19" height="16" fill="#f4f9ff" stroke="#4a86c8" strokeWidth="2" />
      <path d="M2 4h19" stroke="#4a86c8" strokeWidth="3" />
      <path d="M5 8v7h12M5 12h10M13 10l2 2-2 2" fill="none" stroke="#6f86a5" strokeWidth="1.500" />
    </Svg>
  );
}

function MarketWatchIcon() {
  return (
    <Svg>
      <rect x="2" y="2" width="24" height="24" rx="1" fill="#fff" stroke="#5b97d6" strokeWidth="2" />
      <path d="M10 6l5 5h-3v4H8v-4H5z" fill="#27a327" stroke="#0e6b12" />
      <path d="M18 24l5-5h-3v-4h-4v4h-3z" fill="#f2512a" stroke="#b02a0a" />
    </Svg>
  );
}

function CrosshairIcon() {
  return (
    <Svg>
      <circle cx="14" cy="14" r="8" fill="none" stroke="#5a5a5a" strokeWidth="3" />
      <path d="M14 2v24M2 14h24" stroke="#5a5a5a" strokeWidth="2" />
    </Svg>
  );
}

function NavigatorIcon() {
  return (
    <Svg>
      <path d="M1 14V3h8l2 3h10v8z" fill="#f6dc77" stroke="#bf9a2c" />
      <path d="M7 15v10h8" fill="none" stroke="#333" strokeWidth="2" strokeDasharray="2 2" />
      <path d="M19 10l2.500 6 6 .5-4.500 4 1.500 6-5.500-3.500-5.500 3.500 1.500-6-4.500-4 6-.5z" fill="#ffd83b" stroke="#b98713" />
    </Svg>
  );
}

function DataWindowIcon() {
  return (
    <Svg>
      <rect x="2" y="3" width="24" height="22" rx="2" fill="#fff" stroke="#2e6db8" strokeWidth="2" />
      <path d="M3 4h5v20H3z" fill="#3b7cc9" />
      <path d="M11 8h3M11 12h3M11 16h3M11 20h3" stroke="#d33" strokeWidth="1.500" />
      <path d="M16 8h7M16 12h7M16 16h7" stroke="#8aa" />
    </Svg>
  );
}

function TesterIcon() {
  return (
    <Svg>
      <path d="M2 3h17v20H2z" fill="#fff" stroke="#9a9a9a" />
      <path d="M5 8v12M9 6v10" stroke="#999" strokeWidth="2" />
      <circle cx="15" cy="13" r="7" fill="#cfe6fb" fillOpacity="0.9" stroke="#6f9fcc" strokeWidth="2" />
      <path d="M13 9v8M17 9v8" stroke="#4b78b3" strokeWidth="1.500" />
      <path d="M20 19l6 6" stroke="#e0a62a" strokeWidth="4" />
    </Svg>
  );
}

function DocumentPlus() {
  return (
    <Svg>
      <path d="M3 2h12l5 5v17H3z" fill="#fff" stroke="#666" strokeWidth="1.500" />
      <path d="M6 8h8M6 12h10M6 16h6" stroke="#666" strokeWidth="1.500" />
      <PlusBadge />
    </Svg>
  );
}

function BookIcon() {
  return (
    <Svg>
      <path d="M2 16L12 3l14 9-9 13z" fill="#f0b83a" stroke="#9d6a10" strokeWidth="1.500" />
      <path d="M2 16l15 9v-3L4 14z" fill="#fff2cf" stroke="#9d6a10" />
      <path d="M12 3l14 9-2 3L11 6z" fill="#ffdf7d" />
    </Svg>
  );
}

function VpsIcon() {
  return (
    <Svg>
      <path d="M8 1h12l3 3v15H8z" fill="#4da3ec" stroke="#1f6fba" />
      <path d="M10 4h6v10h-6z" fill="#cfe6fb" />
      <path d="M6 26h17a4 4 0 0 0 0-9 6 6 0 0 0-11-2 5 5 0 0 0-6 4 4 4 0 0 0 0 7z" fill="#eef2fa" stroke="#7c8fb5" />
    </Svg>
  );
}

function SignalsIcon() {
  return (
    <Svg>
      <g fill="none" strokeWidth="2">
        <circle cx="14" cy="14" r="12" stroke="#bcc7cb" />
        <circle cx="14" cy="14" r="8" stroke="#9db0b4" />
        <path d="M8 19a7 7 0 1 1 12 0" stroke="#7c98a0" />
      </g>
      <circle cx="14" cy="14" r="3" fill="#4f8f58" />
      <path d="M13 15v11q9-1 12-9" fill="none" stroke="#35b04a" strokeWidth="3" />
    </Svg>
  );
}

function ExpertIcon() {
  return (
    <Svg>
      <path d="M4 13h20l-7 13h-7z" fill="#f6cf4a" stroke="#b98713" />
      <path d="M7 11q0-9 7-9t7 9z" fill="#64b4e8" stroke="#2a7bb8" />
      <ellipse cx="14" cy="11" rx="13" ry="3.500" fill="#8ecdf2" stroke="#2a7bb8" />
      <circle cx="20" cy="20" r="7" fill="#25a825" stroke="#0e6b12" />
      <path d="M18 16l6 4-6 4z" fill="#fff" />
    </Svg>
  );
}

function Axes({ children }) {
  return (
    <Svg>
      <path d="M7 3v23M2 22h24M4 6l3-3 3 3M23 19l3 3-3 3" fill="none" stroke="#606060" strokeWidth="2" />
      {children}
    </Svg>
  );
}

function ZoomIcon({ plus }) {
  return (
    <Svg>
      <path d="M17 17l8 8" stroke="#dba628" strokeWidth="5" />
      <circle cx="11" cy="11" r="9" fill="#d7ecfc" stroke="#4a93d0" strokeWidth="2.500" />
      <path d={plus ? 'M6 11h10M11 6v10' : 'M6 11h10'} stroke="#2c74b8" strokeWidth="3" />
    </Svg>
  );
}

function TileIcon() {
  return (
    <Svg>
      <path d="M2 2h12v12H2z" fill="#5fae2b" /><path d="M14 2h12v12H14z" fill="#2f62d8" />
      <path d="M2 14h12v12H2z" fill="#2f62d8" /><path d="M14 14h12v12H14z" fill="#5fae2b" />
      <path d="M4 6h8v6H4zM16 6h8v6h-8zM4 18h8v6H4zM16 18h8v6h-8z" fill="#eef6ff" />
    </Svg>
  );
}

function ClockIcon() {
  return (
    <Svg>
      <circle cx="14" cy="14" r="11" fill="#fff" stroke="#1d72d2" strokeWidth="4" />
      <path d="M14 7v7l6 1" fill="none" stroke="#333" strokeWidth="2" />
    </Svg>
  );
}

function TemplateIcon() {
  return (
    <Svg>
      <rect x="2" y="2" width="24" height="24" fill="#fff" stroke="#4a86c8" strokeWidth="2" />
      <path d="M2 4h24" stroke="#4a86c8" strokeWidth="4" />
      <path d="M5 13l5-1 4-3h8" fill="none" stroke="#a03020" strokeWidth="2" />
      <path d="M3 15h22" stroke="#4a86c8" />
      <path d="M5 22l5-3 4 3 4-4 5 4" fill="none" stroke="#2a9a3a" strokeWidth="2" />
    </Svg>
  );
}

/* ---------- small shared pieces ---------- */

function Tool({ label, pressed, children }) {
  return (
    <button
      type="button"
      aria-label={label}
      className={`mr-[3px] flex h-[35px] w-[38px] shrink-0 items-center justify-center ${pressed ? 'border border-[#f8f8f8] border-t-[#a0a0a0] border-l-[#a0a0a0] bg-[#f8f8f8]' : ''}`}
    >
      {children}
    </button>
  );
}

function SplitTool({ label, children }) {
  return (
    <button type="button" aria-label={label} className="mr-[3px] flex h-[35px] w-14 shrink-0 items-center gap-2 pl-[5px]">
      {children}
      <Caret />
    </button>
  );
}

const Caret = () => <svg viewBox="0 0 10 6" className="h-1.5 w-2.5 shrink-0" aria-hidden="true"><path d="M0 0h10L5 6z" /></svg>;
const Divider = ({ className = 'mx-1' }) => <span className={`h-[35px] w-px shrink-0 bg-[#a0a0a0] ${className}`} />;
const Grip = () => <span className="mr-px h-[35px] w-[3px] shrink-0 border-x border-dotted border-[#8a8a8a]" />;

function PanelTitle({ title, active }) {
  return (
    <div className="flex h-[22px] shrink-0 items-center">
      <h2 className={`flex-1 bg-gradient-to-r pl-1 text-[16px] leading-[22px] ${active ? 'from-[#99b4d1] to-[#b9d1ea]' : 'from-[#bfcddb] to-[#d7e4f2]'}`}>{title}</h2>
      <button type="button" aria-label={`Close ${title}`} className="flex w-[22px] justify-end pr-0.5"><X className="size-3.5" strokeWidth={3} /></button>
    </div>
  );
}

function PanelTabs({ tabs }) {
  return (
    <div className="flex h-[31px] shrink-0 border-t-2 border-black pl-[3px]">
      <button type="button" className="-mt-0.5 h-[31px] border-2 border-t-0 border-black bg-white px-[14px]">{tabs[0]}</button>
      <button type="button" className="my-1 border-r border-[#606060] px-[15px] leading-5 text-[#6d6d6d]">{tabs[1]}</button>
    </div>
  );
}

/* ---------- window chrome ---------- */

function TitleBar() {
  return (
    <header className="flex h-[34px] shrink-0 items-center bg-gradient-to-r from-[#eaf4f8] via-[#e8f5ee] to-[#eef3f8]">
      <svg viewBox="0 0 26 24" className="ml-0.5 h-6 w-[26px]" aria-hidden="true">
        <path d="M1 0h24l-7 12 7 12h-7l-5-8-6 8H1l8-12z" fill="#d9a032" />
        <path d="M1 0h12l2 8-6 4-4-5z" fill="#1f8f9a" /><path d="M13 12l5 0 7 12h-7z" fill="#2f93a0" />
      </svg>
      <h1 className="ml-1.5 text-[17px]">1090032079: OxSecurities-Demo - Demo Account - Ox Securities Pty Ltd - [EURUSD.PRO,M1]</h1>
      <div className="ml-auto flex items-center">
        <button type="button" aria-label="Minimize" className="flex w-[70px] justify-center"><Minus className="size-[18px]" strokeWidth={1.5} /></button>
        <button type="button" aria-label="Restore" className="flex w-[70px] justify-center"><Copy className="size-[17px] -scale-x-100" strokeWidth={2} /></button>
        <button type="button" aria-label="Close" className="flex w-[72px] justify-center"><X className="size-[22px]" strokeWidth={1.5} /></button>
      </div>
    </header>
  );
}

function MenuBar() {
  const mdi = 'flex h-[26px] w-[27px] items-center justify-center border border-[#e3e3e3] bg-white text-[#6d7580]';
  return (
    <nav className="flex h-[31px] shrink-0 items-center border-b border-[#a0a0a0] bg-[#f0f0f0]">
      <svg viewBox="0 0 26 24" className="ml-1 h-6 w-[26px]" aria-hidden="true">
        <rect x="1" y="1" width="18" height="15" fill="#fff" stroke="#4c86e0" strokeWidth="1.500" /><path d="M1 3h18" stroke="#4c86e0" strokeWidth="3" />
        <rect x="7" y="8" width="18" height="15" fill="#fff" stroke="#4c86e0" strokeWidth="1.500" /><path d="M7 10h18" stroke="#4c86e0" strokeWidth="3" />
        <path d="M10 15l3 4 3-3 3 4 3-5" fill="none" stroke="#7ba3e8" />
      </svg>
      <div className="ml-2.5 flex gap-[25px]">
        {MENU.map((m) => <button key={m} type="button" className="text-[17px]">{m}</button>)}
      </div>
      <div className="ml-auto flex gap-[3px]">
        <button type="button" aria-label="Minimize chart" className={mdi}><Minus className="size-2.5" strokeWidth={5} /></button>
        <button type="button" aria-label="Restore chart" className={mdi}><Copy className="size-2.5 -scale-x-100" strokeWidth={3} /></button>
        <button type="button" aria-label="Close chart" className={mdi}><X className="size-3" strokeWidth={5} /></button>
      </div>
    </nav>
  );
}

function StandardToolbar() {
  return (
    <div className="flex h-10 items-center self-start border-r border-b border-[#a0a0a0] pl-[3px]">
      <Grip />
      <SplitTool label="New chart"><NewChartIcon /></SplitTool>
      <SplitTool label="Profiles"><ProfilesIcon /></SplitTool>
      <Divider />
      <Tool label="Market Watch" pressed><MarketWatchIcon /></Tool>
      <Tool label="Data Window" pressed><CrosshairIcon /></Tool>
      <Tool label="Navigator" pressed><NavigatorIcon /></Tool>
      <Tool label="Terminal" pressed><DataWindowIcon /></Tool>
      <Tool label="Strategy Tester"><TesterIcon /></Tool>
      <Divider className="ml-px mr-1" />
      <button type="button" className="flex h-[35px] w-[129px] items-center gap-1.5 pl-1 whitespace-nowrap"><DocumentPlus />New Order</button>
      <Tool label="MetaEditor"><BookIcon /></Tool>
      <Tool label="Virtual hosting"><VpsIcon /></Tool>
      <Tool label="Signals"><SignalsIcon /></Tool>
      <button type="button" className="mx-0.5 flex h-[35px] w-[139px] items-center gap-1.5 border border-[#f8f8f8] border-t-[#a0a0a0] border-l-[#a0a0a0] bg-[#f8f8f8] pl-0.5 whitespace-nowrap"><ExpertIcon />AutoTrading</button>
      <Divider className="ml-0.5 mr-[3px]" />
      <Grip />
      <Tool label="Bar chart" pressed><Axes><path d="M17 5v14M17 7h5M12 17h5" stroke="#1f9a34" strokeWidth="2.500" /></Axes></Tool>
      <Tool label="Candlesticks"><Axes><path d="M17 1v18" stroke="#1f9a34" strokeWidth="2" /><path d="M13 5h8v10h-8z" fill="#35c44c" stroke="#12761f" /></Axes></Tool>
      <Tool label="Line chart"><Axes><path d="M8 18q6-11 9-9t9 7" fill="none" stroke="#4d9a58" strokeWidth="2" /></Axes></Tool>
      <Divider className="mr-1" />
      <Tool label="Zoom in"><ZoomIcon plus /></Tool>
      <Tool label="Zoom out"><ZoomIcon /></Tool>
      <Tool label="Tile windows"><TileIcon /></Tool>
      <Divider className="mr-1" />
      <Tool label="Auto scroll"><Axes><path d="M13 8l7 5-7 5z" fill="#35c44c" stroke="#12761f" /></Axes></Tool>
      <Tool label="Chart shift" pressed><Axes><path d="M14 4v16" stroke="#2f6fb0" strokeWidth="2" /><path d="M16 12h8M20 8l-4 4 4 4" fill="none" stroke="#c0431c" strokeWidth="2" /></Axes></Tool>
      <Divider className="mr-1" />
      <SplitTool label="Indicators"><DocumentPlus /></SplitTool>
      <SplitTool label="Periods"><ClockIcon /></SplitTool>
      <SplitTool label="Templates"><TemplateIcon /></SplitTool>
    </div>
  );
}

function DrawingToolbar() {
  const line = { fill: 'none', stroke: '#555', strokeWidth: 2 };
  return (
    <div className="flex h-10 items-center self-start border-r border-[#a0a0a0] pl-[3px]">
      <Grip />
      <Tool label="Cursor" pressed><Svg><path d="M9 2v20l5-5 4 9 3-2-4-8h6z" fill="#555" /></Svg></Tool>
      <Tool label="Crosshair"><Svg><path d="M14 2v9M14 17v9M2 14h9M17 14h9M13 14h2" {...line} /></Svg></Tool>
      <Divider className="mr-1" />
      <Tool label="Vertical line"><Svg><path d="M14 4v20" {...line} /></Svg></Tool>
      <Tool label="Horizontal line"><Svg><path d="M4 14h20" {...line} /></Svg></Tool>
      <Tool label="Trendline"><Svg><path d="M4 24L24 5" {...line} /></Svg></Tool>
      <Tool label="Equidistant channel"><Svg><path d="M2 21L22 3M2 13L16 1M6 25l14-13M6 8l-2 14M12 4l-2 16M19 3l-3 13" {...line} /><text x="18" y="26" fontSize="12" fontWeight="bold" fill="#444">E</text></Svg></Tool>
      <Tool label="Fibonacci"><Svg><path d="M3 3h21M3 9h21M3 15h21M3 21h13" {...line} strokeDasharray="2 1" /><text x="18" y="26" fontSize="12" fontWeight="bold" fill="#444">F</text></Svg></Tool>
      <Tool label="Text"><span className="text-[20px] font-bold text-[#555]">A</span></Tool>
      <Tool label="Text label"><Svg><rect x="5" y="4" width="19" height="20" {...line} strokeDasharray="2 2" /><text x="9" y="20" fontSize="17" fontWeight="bold" fill="#555">T</text></Svg></Tool>
      <SplitTool label="Arrows"><Svg><path d="M8 3l5 6H10v3H6V9H3z" fill="#555" /><path d="M20 25l5-6h-3v-3h-4v3h-3z" fill="#555" /><path d="M7 14l5 4 6-8" {...line} /></Svg></SplitTool>
      <Divider className="mx-0.5" />
      <Grip />
      {TIMEFRAMES.map((t) => (
        <Tool key={t} label={t} pressed={t === 'M1'}><span className="text-[15px] text-[#4b4b4b]">{t}</span></Tool>
      ))}
    </div>
  );
}

function Toolbars() {
  return (
    <div className="flex h-20 shrink-0 justify-between border-b border-[#808080] bg-[#f0f0f0]">
      <div className="flex flex-col">
        <StandardToolbar />
        <DrawingToolbar />
      </div>
      <div className="flex h-10 items-center gap-3 pr-1.5">
        <button type="button" aria-label="Search"><svg viewBox="0 0 24 24" className="size-[22px]"><path d="M10 14l-8 8" stroke="#3c68c0" strokeWidth="4" /><circle cx="15" cy="8" r="6" fill="#e2eefb" stroke="#5b83cf" strokeWidth="2.500" /></svg></button>
        <button type="button" aria-label="Messages: 1">
          <svg viewBox="0 0 38 34" className="h-[34px] w-[38px]">
            <path d="M4 22q0-8 10-8t10 8-10 8l-5 3v-4q-5-2-5-7z" fill="#eee" stroke="#9a9a9a" strokeWidth="1.500" />
            <circle cx="24" cy="13" r="12" fill="#dd3318" />
            <text x="24" y="19" fontSize="17" textAnchor="middle" fill="#fff">1</text>
          </svg>
        </button>
      </div>
    </div>
  );
}

/* ---------- side panels ---------- */

function MarketWatch() {
  return (
    <section className="flex h-[755px] shrink-0 flex-col border-b border-[#a0a0a0] pt-0.5 pr-[7px] pb-1.5 pl-1.5">
      <PanelTitle title="Market Watch: 23:46:34" />
      <div className="mt-0.5 min-h-0 flex-1 border-l border-t border-[#828790] bg-white">
        <table className="w-full table-fixed border-separate border-spacing-0 text-right">
          <colgroup><col /><col className="w-[92px]" /><col className="w-[91px]" /><col className="w-[46px]" /></colgroup>
          <thead>
            <tr className="h-[31px]">
              <th className="border-r border-[#e5e5e5] pl-1.5 text-left font-normal">Symbol</th>
              <th className="border-r border-[#e5e5e5] pr-1.5 font-normal">Bid</th>
              <th className="border-r border-[#e5e5e5] pr-1.5 font-normal">Ask</th>
              <th className="pr-1.5 font-normal">!</th>
            </tr>
          </thead>
          <tbody>
            {QUOTES.map((q) => (
              <tr key={q.symbol} className={`h-[30px] ${q.row}`}>
                <td className="border-b border-r border-[#c8c8c8] pl-1 text-left text-black">
                  <span className="flex items-center gap-1.5">
                    <svg viewBox="0 0 18 18" className="size-[18px] shrink-0" aria-hidden="true">
                      <path d={q.up ? 'M9 1l8 8h-4v8H5V9H1z' : 'M9 17l8-8h-4V1H5v8H1z'} fill={q.up ? '#2fc02f' : '#f0572e'} stroke={q.up ? '#0d6b12' : '#9b2a0a'} />
                    </svg>
                    {q.symbol}
                  </span>
                </td>
                <td className="border-b border-r border-[#c8c8c8] pr-1.5">{q.bid}</td>
                <td className="border-b border-r border-[#c8c8c8] pr-1.5">{q.ask}</td>
                <td className="border-b border-[#c8c8c8] pr-1.5">{q.spread}</td>
              </tr>
            ))}
          </tbody>
        </table>
      </div>
      <PanelTabs tabs={['Symbols', 'Tick Chart']} />
    </section>
  );
}

function Navigator() {
  return (
    <section className="flex min-h-0 flex-1 flex-col pt-px pr-[7px] pb-[7px] pl-1.5">
      <PanelTitle title="Navigator" active />
      <div className="mt-0.5 flex min-h-0 flex-1 border-l border-t border-[#828790] bg-white">
        <ul className="min-w-0 flex-1 overflow-hidden pt-0.5 pl-[17px]">
          {INDICATORS.map(([name, grey]) => (
            <li key={name} className="flex h-7 items-center border-l border-dotted border-[#808080] pl-[29px] whitespace-pre">
              <span className="flex h-full items-center border-l border-dotted border-[#808080]">
                <span className="mr-0.5 w-4 border-t border-dotted border-[#808080]" />
                <FunctionIcon grey={grey} />
                <span className={`ml-1.5 px-0.5 ${name === SELECTED ? 'border border-dotted border-[#c06020] bg-[#0078d7] leading-[26px] text-white' : 'leading-7'}`}>{name}</span>
              </span>
            </li>
          ))}
        </ul>
        <div className="w-[26px] shrink-0 bg-[#f0f0f0] pt-[217px] pl-2.5">
          <div className="h-20 w-[5px] rounded-full bg-[#868686]" />
        </div>
      </div>
      <PanelTabs tabs={['Common', 'Favorites']} />
    </section>
  );
}

function DataRow({ icon, name, value, shade }) {
  return (
    <tr className={shade ? 'bg-[#eaeaea]' : 'bg-white'}>
      <td className="h-[30px] border-b border-r border-[#c5c5c5] p-0 pl-1">
        <span className="flex items-center gap-1">{icon || <span className="w-[22px]" />}{name}</span>
      </td>
      <td className="h-[30px] border-b border-[#c5c5c5] p-0 pr-1.5 text-right">{value}</td>
    </tr>
  );
}

function DataWindow() {
  return (
    <section className="flex w-[443px] shrink-0 flex-col border-r border-[#a0a0a0] pt-0.5 pr-1 pb-[5px] pl-1.5">
      <PanelTitle title="Data Window" />
      <div className="mt-0.5 flex min-h-0 flex-1 border-l border-t border-[#828790] bg-[#f0f0f0]">
        <div className="min-w-0 flex-1 overflow-hidden">
          <table className="w-full table-fixed border-separate border-spacing-0">
            <colgroup><col className="w-[215px]" /><col /></colgroup>
            <thead>
              <tr className="bg-[#eaeaea]">
                <th colSpan={2} className="h-[30px] border-b border-[#c5c5c5] pl-1 text-left font-normal"><span className="flex items-center gap-1"><WindowIcon />EURUSD.PRO,M1</span></th>
              </tr>
            </thead>
            <tbody>
              {BAR_VALUES.map(([n, v], i) => <DataRow key={n} name={n} value={v} shade={i % 2 === 1} />)}
              {BUFFERS.map(([n, v], i) => <DataRow key={n} icon={<FunctionIcon />} name={n} value={v} shade={i % 2 === 0} />)}
              <tr className="bg-[#eaeaea]">
                <td colSpan={2} className="h-[30px] border-b border-[#c5c5c5] pl-0.5"><span className="flex items-center gap-1"><WindowIcon />Indicator window 1</span></td>
              </tr>
              <DataRow icon={<FunctionIcon />} name="High Volatility" value="0.0002" />
            </tbody>
          </table>
        </div>
        <div className="w-[28px] shrink-0 pt-[25px] pl-[11px]">
          <div className="h-[1078px] w-[5px] rounded-full bg-[#868686]" />
        </div>
      </div>
    </section>
  );
}

function ChartTabs() {
  return (
    <div className="flex h-[33px] shrink-0 border-t-2 border-black bg-[#f0f0f0] pl-[5px]">
      {CHART_TABS.map((t, i) => (i === 0
        ? <button key={i} type="button" className="-mt-0.5 h-[31px] w-[168px] border-2 border-t-0 border-black bg-white">{t}</button>
        : <button key={i} type="button" className={`my-1 border-r border-[#606060] leading-5 text-[#6d6d6d] ${i < 4 ? 'w-[168px]' : 'w-[172px]'}`}>{t}</button>))}
      <div className="ml-auto flex items-center gap-[22px] pr-3.5">
        <svg viewBox="0 0 6 12" className="h-3 w-1.5" aria-hidden="true"><path d="M6 0v12L0 6z" fill="#a0a0a0" /></svg>
        <svg viewBox="0 0 6 12" className="h-3 w-1.5" aria-hidden="true"><path d="M0 0v12l6-6z" fill="#a0a0a0" /></svg>
      </div>
    </div>
  );
}

/* ---------- terminal ---------- */

function Terminal() {
  return (
    <section className="flex h-[394px] shrink-0 border-t border-[#a0a0a0] bg-[#f0f0f0] pt-1.5">
      <div className="flex w-6 shrink-0 flex-col">
        <button type="button" aria-label="Close terminal" className="flex h-[22px] items-center justify-center"><X className="size-3.5" strokeWidth={3} /></button>
        <div className="flex flex-1 rotate-180 items-start bg-gradient-to-t from-[#d7e4f2] to-[#b3c3d6] pt-1 pl-px [writing-mode:vertical-rl]">
          <h2 className="text-[15px] leading-[22px] font-bold">Terminal</h2>
        </div>
      </div>
      <div className="flex min-w-0 flex-1 flex-col pb-1.5">
        <div className="flex min-h-0 flex-1 border-t border-l border-[#828790]">
          <div className="min-w-0 flex-1 overflow-hidden bg-white">
            <table className="w-full table-fixed border-separate border-spacing-0 text-left whitespace-nowrap">
              <colgroup><col className="w-[240px]" /><col /></colgroup>
              <thead>
                <tr>
                  <th className="h-8 border-b border-r border-[#c5c5c5] pl-1.5 font-normal">Time</th>
                  <th className="h-8 border-b border-[#c5c5c5] pl-1.5 font-normal">Message</th>
                </tr>
              </thead>
              <tbody>
                {LOG.map(([time, message, error], i) => (
                  <tr key={time} className={i % 2 ? 'bg-white' : 'bg-[#eaeaea]'}>
                    <td className="h-[30px] border-b border-r border-[#c5c5c5] pl-1">
                      <span className="flex items-center">
                        <span className="flex w-[27px] pl-0.5">
                          {error
                            ? <svg viewBox="0 0 20 20" className="size-5" aria-label="Error"><circle cx="10" cy="10" r="9" fill="#e02020" stroke="#8a0d0d" /><path d="M5 10h10" stroke="#fff" strokeWidth="3" /></svg>
                            : <svg viewBox="0 0 12 12" className="ml-0.5 size-3" aria-hidden="true"><circle cx="6" cy="6" r="4.500" fill="#d4d4d4" stroke="#8c8c8c" strokeWidth="2" /><path d="M4 8l4-4" stroke="#8c8c8c" /></svg>}
                        </span>
                        {time}
                      </span>
                    </td>
                    <td className="h-[30px] border-b border-[#c5c5c5] pl-1.5">{message}</td>
                  </tr>
                ))}
              </tbody>
            </table>
          </div>
          <div className="w-[30px] shrink-0 bg-[#f0f0f0] pt-7 pl-2.5"><div className="h-6 w-[5px] rounded-full bg-[#868686]" /></div>
        </div>
        <div className="flex h-8 shrink-0 border-t-2 border-black">
          {TERMINAL_TABS.map(([name, width, count]) => (name === 'Experts'
            ? <button key={name} type="button" className={`-mt-0.5 h-[31px] border-2 border-t-0 border-black bg-white ${width}`}>{name}</button>
            : (
              <button key={name} type="button" className={`my-[3px] flex items-end justify-center border-r border-[#606060] leading-6 whitespace-nowrap text-[#6d6d6d] ${width}`}>
                {name}{count && <span className="ml-0.5 text-[14px] leading-4 font-bold text-[#ee1c25]">{count}</span>}
              </button>
            )))}
        </div>
      </div>
    </section>
  );
}

function StatusBar() {
  const cell = 'border-l border-[#c4c4c4] pl-[5px]';
  return (
    <footer className="flex h-[34px] shrink-0 items-center border-t border-[#a0a0a0] bg-[#f0f0f0] pl-0.5 leading-7">
      <span className="flex-1">For Help, press F1</span>
      <span className={`${cell} w-[176px]`}>Default</span>
      <span className={`${cell} w-[160px]`}>2025.09.12 10:01</span>
      <span className={`${cell} w-[108px]`}>O: 1.17430</span>
      <span className={`${cell} w-[110px]`}>H: 1.17441</span>
      <span className={`${cell} w-[105px]`}>L: 1.17425</span>
      <span className={`${cell} w-[105px]`}>C: 1.17439</span>
      <span className={`${cell} w-[105px]`}>V: 87</span>
      <span className={`${cell} flex w-[194px] items-center gap-1.5`}>
        <svg viewBox="0 0 40 24" className="h-6 w-10" aria-hidden="true">
          {Array.from({ length: 10 }, (_, i) => (
            <g key={i} strokeWidth="3">
              <path d={`M${2 + i * 4} 2V${12 + i}`} stroke="#4d8a2a" />
              <path d={`M${2 + i * 4} ${12 + i}V22`} stroke="#b03524" />
            </g>
          ))}
        </svg>
        34000/22 kb
      </span>
    </footer>
  );
}

// freehand arrows drawn over the workspace
function Annotations() {
  return (
    <svg className="pointer-events-none absolute inset-0 size-full" aria-hidden="true">
      <g fill="none" stroke="#e8191c" strokeWidth="5" strokeLinecap="round" strokeLinejoin="round">
        <path d="M1840 58q3 40 1 78M1822 112l19 25 17-32" />
        <path d="M2574 76q-2 35 1 70M2556 118l18 27 17-37" />
        <path d="M751 1005q40-1 75 8l20-2M827 985q12 18 27 27-20-6-31 27l14-29-10-25" />
        <path d="M734 1453q50 6 90 8l22 0M828 1417l-17 68 36-24-14-38" />
      </g>
    </svg>
  );
}

export default function App() {
  return (
    <div className="relative flex h-screen flex-col overflow-hidden bg-[#f0f0f0] font-['Open_Sans','Noto_Sans',sans-serif] text-[17px] leading-6 text-black">
      <TitleBar />
      <MenuBar />
      <Toolbars />
      <main className="flex min-h-0 flex-1">
        <aside className="flex w-[380px] shrink-0 flex-col border-r border-[#a0a0a0]">
          <MarketWatch />
          <Navigator />
        </aside>
        <DataWindow />
        <div className="flex min-w-0 flex-1 flex-col">
          <PriceChart />
          <ChartTabs />
        </div>
      </main>
      <Terminal />
      <StatusBar />
      <Annotations />
    </div>
  );
}
